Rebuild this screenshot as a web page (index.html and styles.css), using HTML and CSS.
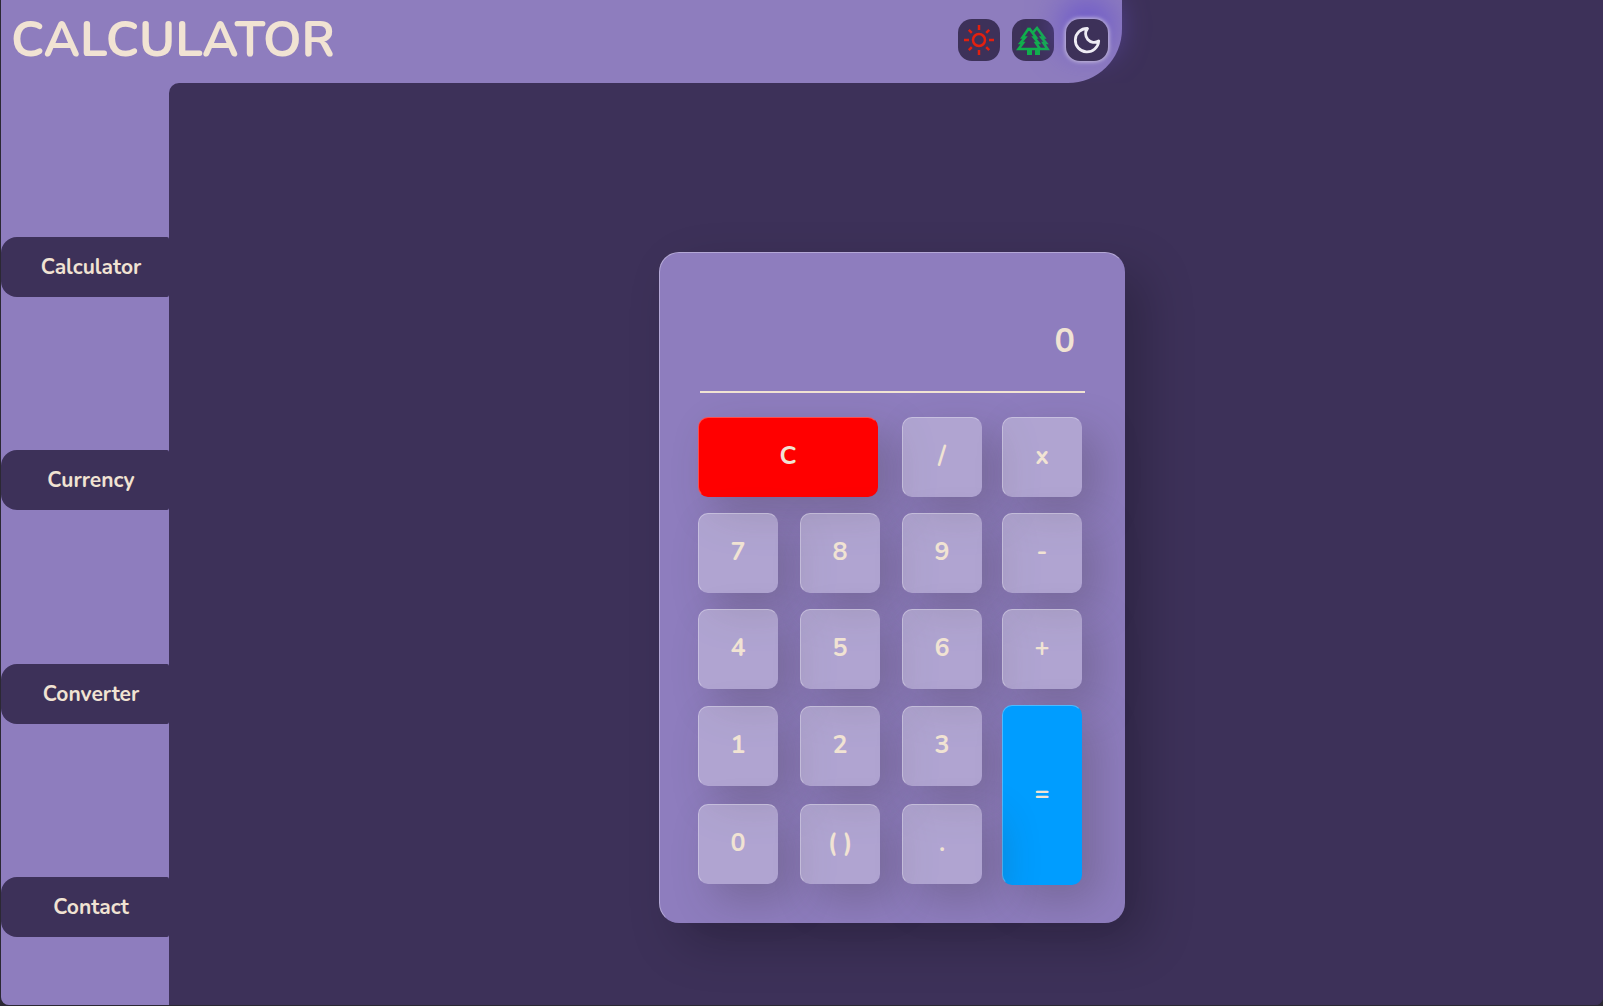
FILE: index.html
```html
<!DOCTYPE html>
<html lang="en">
<head>
<meta charset="utf-8">
<title>Calculator</title>
<meta name="viewport" content="width=device-width, initial-scale=1">
<link rel="stylesheet" href="styles.css">
</head>
<body>
<div class="app">
  <header class="header">
    <h1 class="title">CALCULATOR</h1>
    <div class="themes">
      <button class="theme theme-sun" type="button" aria-label="Light theme">
        <svg viewBox="0 0 32 32" width="32" height="32" fill="none" stroke="currentColor" stroke-width="2.5" stroke-linecap="butt">
          <circle cx="16" cy="16" r="6"/>
          <path d="M16 1v5M16 26v5M1 16h5M26 16h5M5.800 5.800l3 3M23.200 23.200l3 3M26.200 5.800l-3 3M8.800 23.200l-3 3"/>
        </svg>
      </button>
      <button class="theme theme-forest" type="button" aria-label="Forest theme">
        <svg viewBox="0 0 34 30" width="34" height="30" fill="none" stroke="currentColor" stroke-width="2.6">
          <path d="M13 3L6.500 12.500H9L4.500 18H7L2.500 24H24L20 18H22.500L18 12.500H20L13 3M16.500 8L21 3L28 12.500H25.500L30 18H27.500L31.500 24H23"/>
          <path fill="currentColor" stroke="none" d="M11 24h5v6h-5zM19 24h5v6h-5z"/>
        </svg>
      </button>
      <button class="theme theme-moon" type="button" aria-label="Dark theme" aria-pressed="true">
        <svg viewBox="0 0 28 28" width="28" height="28" fill="none" stroke="currentColor" stroke-width="2.8" stroke-linejoin="round">
          <path d="M14.500 2.500A11.700 11.700 0 1 0 25.700 15A8.500 8.500 0 0 1 14.500 2.500Z"/>
        </svg>
      </button>
    </div>
  </header>
  <div class="body">
    <nav class="sidebar">
      <a class="tab" href="#calculator">Calculator</a>
      <a class="tab" href="#currency">Currency</a>
      <a class="tab" href="#converter">Converter</a>
      <a class="tab" href="#contact">Contact</a>
    </nav>
    <main class="main">
      <section class="calculator" aria-label="Calculator">
        <output class="display">0</output>
        <div class="keys">
          <button class="key key-clear" type="button">C</button>
          <button class="key" type="button">/</button>
          <button class="key" type="button">x</button>
          <button class="key" type="button">7</button>
          <button class="key" type="button">8</button>
          <button class="key" type="button">9</button>
          <button class="key" type="button">-</button>
          <button class="key" type="button">4</button>
          <button class="key" type="button">5</button>
          <button class="key" type="button">6</button>
          <button class="key" type="button">+</button>
          <button class="key" type="button">1</button>
          <button class="key" type="button">2</button>
          <button class="key" type="button">3</button>
          <button class="key key-equals" type="button">=</button>
          <button class="key" type="button">0</button>
          <button class="key" type="button">( )</button>
          <button class="key" type="button">.</button>
        </div>
      </section>
    </main>
  </div>
</div>
</body>
</html>
```
FILE: styles.css
```css
:root {
  --dark: #3d3159;
  --violet: #8e7dbe;
  --cream: #f1e3d3;
}

* {
  box-sizing: border-box;
}

html {
  background: #2b2833;
}

body {
  margin: 0;
  padding: 0 0 1px 1px;
  font-family: Nunito, "Open Sans", sans-serif;
  font-weight: 750;
  color: var(--cream);
}

.app {
  display: flex;
  flex-direction: column;
  min-height: calc(100vh - 1px);
  background: var(--dark);
  border-radius: 0 0 8px 8px;
  overflow: hidden;
}

.header {
  display: flex;
  align-items: center;
  justify-content: space-between;
  width: 70%;
  height: 83px;
  padding: 0 14px 4px 10px;
  background: var(--violet);
  border-radius: 0 0 54px 0;
}

.title {
  margin: 0;
  font-size: 49px;
  font-weight: 750;
  line-height: 60px;
}

.themes {
  display: flex;
  gap: 12px;
}

.theme {
  display: grid;
  place-items: center;
  width: 42px;
  height: 42px;
  padding: 0;
  border: 0;
  border-radius: 14px;
  background: var(--dark);
}

.theme-sun {
  color: #e3200f;
}

.theme-forest {
  color: #10b04c;
}

.theme-moon {
  color: #eeecf4;
  box-shadow: 0 0 4px 1px #c9c0dc, 0 -14px 34px 4px #6a55cc;
}

.body {
  display: flex;
  flex: 1;
  background: linear-gradient(to right, var(--violet) 200px, var(--dark) 200px);
}

.sidebar {
  display: flex;
  flex-direction: column;
  justify-content: space-between;
  flex: none;
  width: 168px;
  padding: 154px 0 68px;
}

.tab {
  height: 60px;
  padding-left: 12px;
  border-radius: 16px 2px 2px 16px;
  background: var(--dark);
  color: var(--cream);
  font-size: 21px;
  line-height: 60px;
  text-align: center;
  text-decoration: none;
}

.main {
  display: flex;
  flex: 1;
  justify-content: center;
  align-items: flex-start;
  padding: 169px 0 80px 12px;
  border-radius: 10px 0 0 0;
  background: var(--dark);
}

.calculator {
  width: 466px;
  padding: 38px;
  border: 1px solid transparent;
  border-top-color: #b4a8d6;
  border-left-color: #b4a8d6;
  border-radius: 20px;
  background: var(--violet) border-box;
  box-shadow: 20px 20px 50px rgba(0, 0, 0, 0.22);
}

.display {
  display: block;
  height: 102px;
  margin: 0 1px 24px 2px;
  padding: 26px 10px 0;
  border-bottom: 2px solid var(--cream);
  font-size: 34px;
  line-height: 48px;
  text-align: right;
}

.keys {
  display: grid;
  grid-template-columns: 102px 102px 100px 80px;
  grid-template-rows: 96px 96px 97px 98px 80px;
  align-items: start;
  justify-items: start;
}

.key {
  width: 80px;
  height: 80px;
  padding: 0 0 2px;
  border: 1px solid transparent;
  border-top-color: rgba(255, 255, 255, 0.3);
  border-left-color: rgba(255, 255, 255, 0.3);
  border-radius: 10px;
  background: rgba(255, 255, 255, 0.3) border-box;
  box-shadow: 16px 16px 40px rgba(60, 50, 60, 0.27);
  color: var(--cream);
  font: inherit;
  font-size: 25px;
}

.key-clear {
  grid-column: span 2;
  width: 180px;
  background-color: #f00;
}

.key-equals {
  grid-row: span 2;
  align-self: center;
  height: 180px;
  background-color: #009dff;
}
```
